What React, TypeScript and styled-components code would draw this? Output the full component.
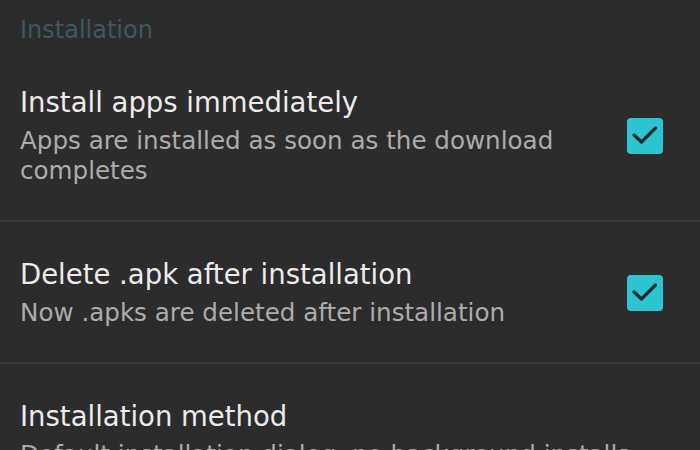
import React from 'react';
import styled, { createGlobalStyle } from 'styled-components';

const GlobalStyle = createGlobalStyle`
  html, body {
    margin: 0;
    padding: 0;
    background: #2c2c2c;
    overflow: hidden;
  }
`;

const Screen = styled.div`
  width: 700px;
  height: 450px;
  overflow: hidden;
  background: #2c2c2c;
  font-family: 'DejaVu Sans', Roboto, Arial, sans-serif;
`;

const SectionHeader = styled.div`
  padding: 15px 20px 5px;
  font-size: 24px;
  line-height: 30px;
  color: #3d5962;
`;

const Item = styled.div<{ $last?: boolean }>`
  display: flex;
  align-items: center;
  padding: 36px 37px 34px 20px;
  border-bottom: ${(p) => (p.$last ? 'none' : '2px solid #3a3a3a')};
`;

const Texts = styled.div`
  flex: 1;
  display: flex;
  flex-direction: column;
  gap: 8px;
`;

const Title = styled.div`
  font-size: 27.5px;
  line-height: 32px;
  color: #ebebeb;
`;

const Summary = styled.div`
  font-size: 24.6px;
  line-height: 30px;
  color: #acacac;
`;

const Box = styled.div`
  width: 36px;
  height: 36px;
  border-radius: 4px;
  background: #2dc4d1;
  flex-shrink: 0;
  margin-left: 20px;
  display: flex;
  align-items: center;
  justify-content: center;
`;

const CheckBox = () => (
  <Box>
    <svg width="36" height="36" viewBox="0 0 36 36">
      <path d="M7 17 L14.5 24 L28.5 10" fill="none" stroke="#1c2a2e" strokeWidth="3.2" strokeLinecap="round" strokeLinejoin="round" />
    </svg>
  </Box>
);

const items = [
  {
    title: 'Install apps immediately',
    summary: 'Apps are installed as soon as the download completes',
    checked: true,
  },
  {
    title: 'Delete .apk after installation',
    summary: 'Now .apks are deleted after installation',
    checked: true,
  },
  {
    title: 'Installation method',
    summary: 'Default installation dialog, no background installs',
    checked: false,
  },
];

const App: React.FC = () => {
  return (
    <Screen>
      <GlobalStyle />
      <SectionHeader>Installation</SectionHeader>
      {items.map((it, i) => (
        <Item key={it.title} $last={i === items.length - 1}>
          <Texts>
            <Title>{it.title}</Title>
            <Summary>{it.summary}</Summary>
          </Texts>
          {it.checked && <CheckBox />}
        </Item>
      ))}
    </Screen>
  );
};

export default App;
